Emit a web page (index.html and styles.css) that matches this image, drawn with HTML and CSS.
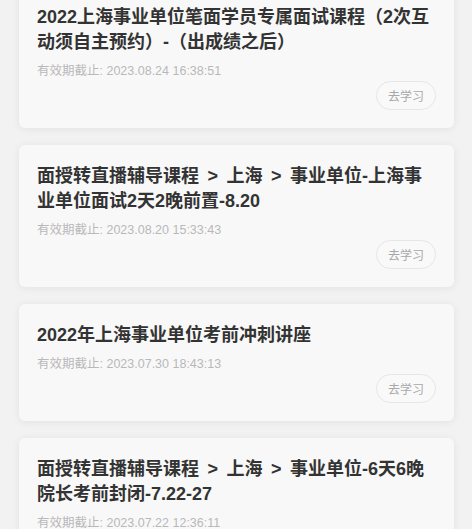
FILE: index.html
```html
<!DOCTYPE html>
<html lang="zh-CN">
<head>
  <meta charset="UTF-8" />
  <meta name="viewport" content="width=device-width, initial-scale=1.0"/>
  <title>我的课程</title>
  <link rel="stylesheet" href="styles.css">
</head>
<body>
  <main class="course-list">
    <div class="course">
      <h3 class="course-title">2022上海事业单位笔面学员专属面试课程（2次互动须自主预约）-（出成绩之后）</h3>
      <p class="course-expire">有效期截止: 2023.08.24 16:38:51</p>
      <div class="course-actions"><button class="study-btn">去学习</button></div>
    </div>
    <div class="course">
      <h3 class="course-title">面授转直播辅导课程 &gt; 上海 &gt; 事业单位-上海事业单位面试2天2晚前置-8.20</h3>
      <p class="course-expire">有效期截止: 2023.08.20 15:33:43</p>
      <div class="course-actions"><button class="study-btn">去学习</button></div>
    </div>
    <div class="course">
      <h3 class="course-title">2022年上海事业单位考前冲刺讲座</h3>
      <p class="course-expire">有效期截止: 2023.07.30 18:43:13</p>
      <div class="course-actions"><button class="study-btn">去学习</button></div>
    </div>
    <div class="course">
      <h3 class="course-title">面授转直播辅导课程 &gt; 上海 &gt; 事业单位-6天6晚院长考前封闭-7.22-27</h3>
      <p class="course-expire">有效期截止: 2023.07.22 12:36:11</p>
      <div class="course-actions"><button class="study-btn">去学习</button></div>
    </div>
  </main>
</body>
</html>
```

FILE: styles.css
```css
* {
  box-sizing: border-box;
  margin: 0;
  padding: 0;
}
html, body {
  height: 100%;
  overflow: hidden;
}
body {
  font-family: "Liberation Sans", "Noto Sans CJK SC", sans-serif;
  background: #f2f2f2;
  color: #333;
}
/* list is scrolled a little, first card starts above the fold */
.course-list {
  display: flex;
  flex-direction: column;
  gap: 17px;
  margin-top: -14px;
  padding: 0 18px 0 19px;
}
.course {
  background: #f8f8f8;
  border-radius: 6px;
  padding: 19px 18px 18px 18px;
  box-shadow: 0 1px 8px rgba(0, 0, 0, 0.07);
}
.course-title {
  font-size: 18px;
  line-height: 25px;
  font-weight: bold;
  word-spacing: 3.5px;
  color: #333;
}
.course-expire {
  margin-top: 8px;
  font-size: 12.5px;
  line-height: 16px;
  color: #b8b8b8;
}
.course-actions {
  display: flex;
  justify-content: flex-end;
  margin-top: 2px;
}
.study-btn {
  width: 60px;
  height: 29px;
  border: 1px solid #e6e6e6;
  border-radius: 15px;
  background: #f9f9f9;
  color: #a8a8a8;
  font-family: inherit;
  font-size: 12px;
}
```
